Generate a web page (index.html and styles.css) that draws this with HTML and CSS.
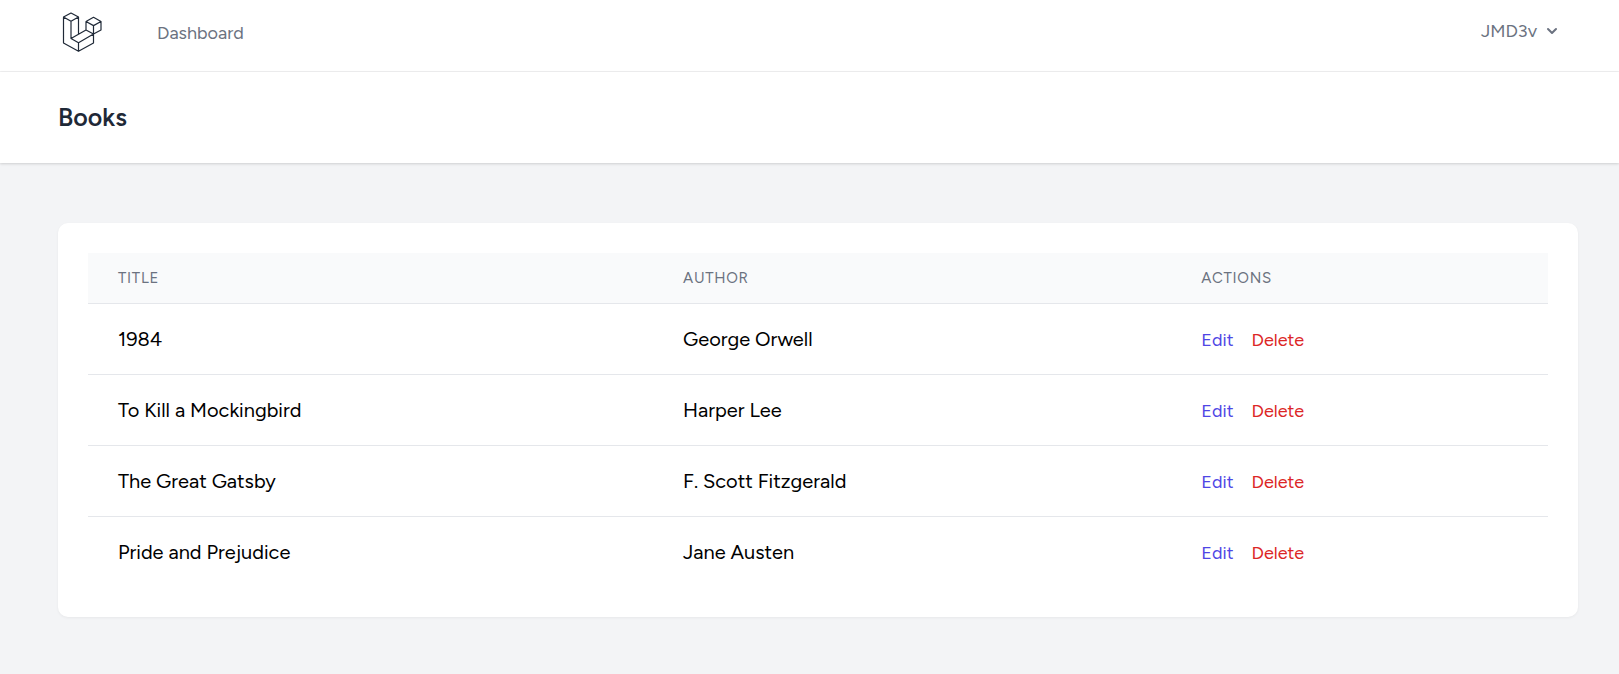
FILE: index.html
```html
<!DOCTYPE html>
<html lang="en">
<head>
<meta charset="utf-8">
<meta name="viewport" content="width=device-width, initial-scale=1">
<title>Books</title>
<link rel="stylesheet" href="styles.css">
</head>
<body>
<nav class="nav">
  <a class="logo" href="#" aria-label="Home">
    <svg width="40" height="40" viewBox="0 0 40 40" fill="none" stroke="#1f2937" stroke-width="1.2" stroke-linejoin="round" aria-hidden="true">
      <path d="M1.5 6 9 2 16.5 6 9 10.3ZM1.5 6V32L16.5 40.3 31.5 32V23M9 10.3V27.5L16.5 31.8V40.3M16.5 6V23M9 27.5 24 19M16.5 31.8 31.5 23M24 10.5 31.5 6.3 39 10.5 31.5 14.6ZM24 10.5V19L31.5 23 39 19V10.5M31.5 14.6V23"/>
    </svg>
  </a>
  <a class="nav-link" href="#">Dashboard</a>
  <button class="user-menu" type="button">
    <span>JMD3v</span>
    <svg width="20" height="20" viewBox="0 0 20 20" fill="currentColor" aria-hidden="true"><path fill-rule="evenodd" d="M5.293 7.293a1 1 0 011.414 0L10 10.586l3.293-3.293a1 1 0 111.414 1.414l-4 4a1 1 0 01-1.414 0l-4-4a1 1 0 010-1.414z"/></svg>
  </button>
</nav>
<header class="page-header">
  <h1 class="page-title">Books</h1>
</header>
<main class="content">
  <section class="card">
    <table class="books">
      <colgroup><col class="col-title"><col class="col-author"><col></colgroup>
      <thead>
        <tr><th scope="col">Title</th><th scope="col">Author</th><th scope="col">Actions</th></tr>
      </thead>
      <tbody>
        <tr><td>1984</td><td>George Orwell</td><td class="actions"><a class="edit" href="#">Edit</a><button class="delete" type="button">Delete</button></td></tr>
        <tr><td>To Kill a Mockingbird</td><td>Harper Lee</td><td class="actions"><a class="edit" href="#">Edit</a><button class="delete" type="button">Delete</button></td></tr>
        <tr><td>The Great Gatsby</td><td>F. Scott Fitzgerald</td><td class="actions"><a class="edit" href="#">Edit</a><button class="delete" type="button">Delete</button></td></tr>
        <tr><td>Pride and Prejudice</td><td>Jane Austen</td><td class="actions"><a class="edit" href="#">Edit</a><button class="delete" type="button">Delete</button></td></tr>
      </tbody>
    </table>
  </section>
</main>
</body>
</html>
```
FILE: styles.css
```css
* { box-sizing: border-box; }
body {
  margin: 0;
  background: #f3f4f6;
  color: #000;
  font-family: Figtree, Lato, sans-serif;
  font-size: 20px;
  line-height: 30px;
}
a { text-decoration: none; }
button {
  padding: 0;
  border: 0;
  background: none;
  font: inherit;
  cursor: pointer;
}
.nav {
  display: flex;
  align-items: center;
  padding: 10px 57px 20px 62px;
  min-height: 72px;
  background: #fff;
  border-bottom: 1px solid #f0f0f1;
}
.logo { display: block; height: 40px; }
.logo svg { overflow: visible; }
.nav-link {
  margin-left: 55px;
  padding-top: 4px;
  color: #6b7280;
  font-size: 18px;
}
.user-menu {
  display: flex;
  align-items: center;
  gap: 5px;
  margin-left: auto;
  color: #6b7280;
  font-size: 18px;
}
.page-header {
  position: relative;
  padding: 30px 41px 31px 58px;
  background: #fff;
  box-shadow: 0 1px 3px rgba(0, 0, 0, .1), 0 1px 2px rgba(0, 0, 0, .06);
}
.page-title {
  margin: 0;
  color: #1f2937;
  font-size: 25px;
  font-weight: 600;
  line-height: 30px;
}
.content { padding: 60px 41px 57px 58px; }
.card {
  padding: 30px;
  background: #fff;
  border-radius: 10px;
  box-shadow: 0 1px 3px rgba(0, 0, 0, .05);
}
.books {
  width: 100%;
  border-collapse: separate;
  border-spacing: 0;
  table-layout: fixed;
}
.col-title { width: 38.7%; }
.col-author { width: 35.5%; }
.books th {
  padding: 15px 30px;
  background: #f9fafb;
  color: #6b7280;
  font-size: 15px;
  font-weight: 400;
  letter-spacing: 0.05em;
  line-height: 20px;
  text-align: left;
  text-transform: uppercase;
}
.books td {
  height: 71px;
  padding: 20px 30px;
  border-top: 1px solid #e5e7eb;
}
.books .actions {
  padding-top: 21px;
  padding-bottom: 19px;
  font-size: 18px;
}
.edit { color: #4f46e5; }
.delete { margin-left: 18px; color: #dc2626; }
```
